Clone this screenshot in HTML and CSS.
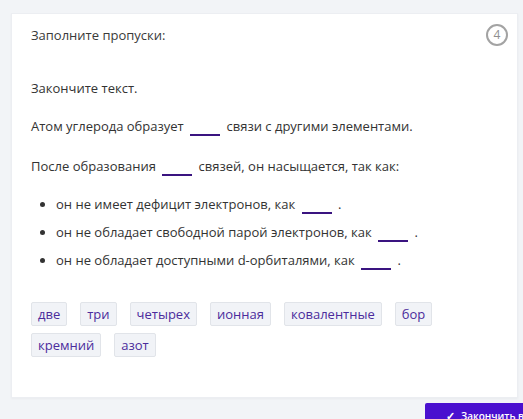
FILE: index.html
```html
<!DOCTYPE html>
<html lang="ru">
<head>
<meta charset="utf-8">
<link rel="stylesheet" href="styles.css">
</head>
<body>
<div class="page">
  <div class="card">
    <div class="card-head">
      <div class="title">Заполните пропуски:</div>
      <div class="badge">4</div>
    </div>
    <div class="content">
      <p class="para">Закончите текст.</p>
      <p class="para">Атом углерода образует <span class="blank"></span> связи с другими элементами.</p>
      <p class="para">После образования <span class="blank"></span> связей, он насыщается, так как:</p>
      <ul class="list">
        <li>он не имеет дефицит электронов, как <span class="blank"></span> .</li>
        <li>он не обладает свободной парой электронов, как <span class="blank"></span> .</li>
        <li>он не обладает доступными d-орбиталями, как <span class="blank"></span> .</li>
      </ul>
      <div class="chips">
        <span class="chip">две</span>
        <span class="chip">три</span>
        <span class="chip">четырех</span>
        <span class="chip">ионная</span>
        <span class="chip">ковалентные</span>
        <span class="chip">бор</span>
        <span class="chip">кремний</span>
        <span class="chip">азот</span>
      </div>
    </div>
  </div>
  <div class="footer">
    <button class="finish"><span class="check">✓</span>Закончить выполнение</button>
  </div>
</div>
</body>
</html>
```
FILE: styles.css
```css
html, body {
  margin: 0;
  padding: 0;
  overflow: hidden;
  background: #f2f4f7;
  height: 419px;
}
body {
  font-family: "Open Sans", "Noto Sans", sans-serif;
  color: #333333;
  font-size: 13px;
}
.page {
  padding: 13px 0 0 11px;
  width: 523px;
}
.card {
  width: 507px;
  height: 385px;
  box-sizing: border-box;
  background: #ffffff;
  border: 1px solid #eceef2;
  box-shadow: 0 1px 2px rgba(0,0,0,0.04);
  padding: 9px 9px 0 19px;
}
.card-head {
  display: flex;
  justify-content: space-between;
  align-items: center;
}
.title {
  line-height: 22px;
  color: #3a3a3a;
}
.badge {
  width: 18px;
  height: 18px;
  border: 2px solid #a3a3a3;
  border-radius: 50%;
  color: #8f8f8f;
  font-size: 12px;
  line-height: 18px;
  text-align: center;
  margin-top: 1px;
}
.content {
  padding-top: 32px;
}
.para {
  margin: 0 0 18px 0;
  line-height: 20px;
}
.para:nth-child(2) {
  margin-bottom: 20px;
}
.blank {
  display: inline-block;
  width: 30px;
  height: 14px;
  margin: 0 3px;
  border-bottom: 2px solid #3a1480;
  vertical-align: -5px;
}
.list {
  margin: 18px 0 0 0;
  padding-left: 25px;
}
.list li {
  line-height: 20px;
  margin-bottom: 8px;
}
.chips {
  display: flex;
  flex-wrap: wrap;
  column-gap: 13px;
  row-gap: 7px;
  margin-top: 32px;
  width: 420px;
}
.chip {
  display: inline-block;
  background: #f1f3f7;
  border: 1px solid #e1e4e9;
  border-radius: 2px;
  padding: 2px 6px;
  line-height: 18px;
  color: #4b2c9c;
  font-size: 13px;
}
.footer {
  padding: 5px 0 0 414px;
}
.finish {
  display: block;
  white-space: nowrap;
  border: none;
  background: #4a10cf;
  color: #ffffff;
  font-family: "Open Sans", "Noto Sans", sans-serif;
  font-size: 10px;
  font-weight: 600;
  padding: 5px 20px 10px 21px;
  border-radius: 2px 0 0 0;
  width: 160px;
  text-align: left;
}
.check {
  font-size: 11px;
  margin-right: 6px;
}
```
